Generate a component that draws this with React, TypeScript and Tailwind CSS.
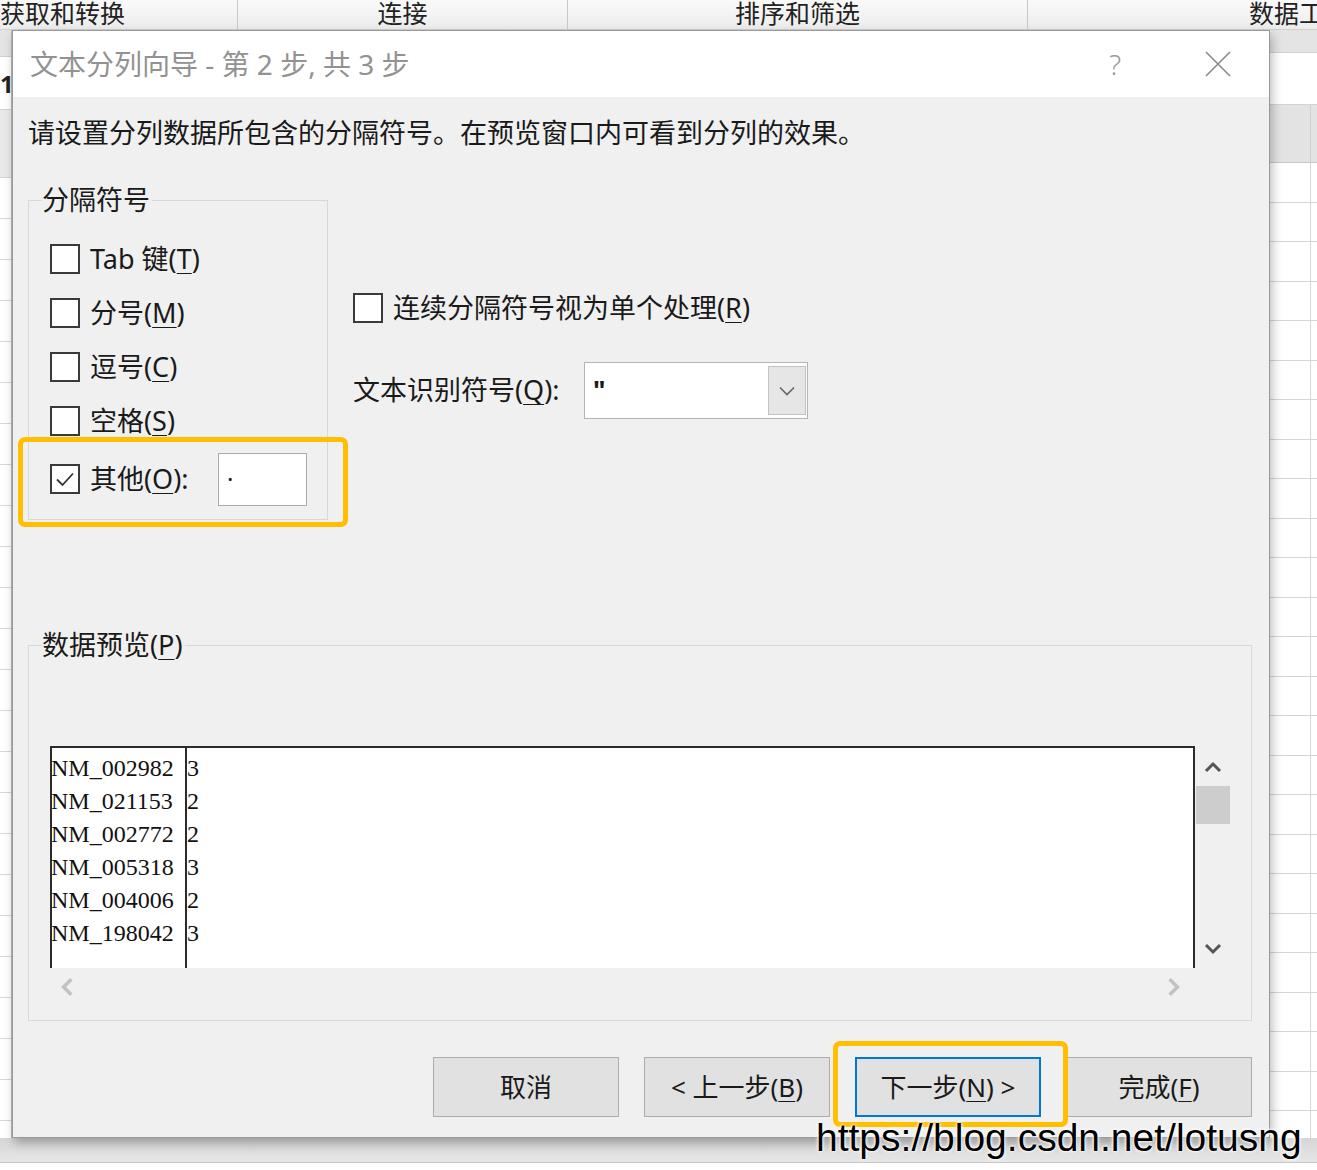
import React from 'react';

const ui = "font-['Noto_Sans','Noto_Sans_CJK_SC',sans-serif]";

// mnemonic letter, underlined like a Windows access key
const Key = ({ k }: { k: string }) => (
  <span className="underline decoration-1 underline-offset-[4px]">{k}</span>
);

const CheckBox = ({ checked = false }: { checked?: boolean }) => (
  <span className="flex h-[30px] w-[30px] shrink-0 items-center justify-center border-2 border-[#3a3a3a] bg-white">
    {checked && (
      <svg width="22" height="22" viewBox="0 0 22 22">
        <path d="M3 11.5 L8.5 17 L19 5.5" fill="none" stroke="#333" strokeWidth="1.8" />
      </svg>
    )}
  </span>
);

const rows: [string, string][] = [
  ['NM_002982', '3'],
  ['NM_021153', '2'],
  ['NM_002772', '2'],
  ['NM_005318', '3'],
  ['NM_004006', '2'],
  ['NM_198042', '3'],
];

const Chevron = ({ dir, color, w = 18, sw = 3 }: { dir: 'up' | 'down' | 'left' | 'right'; color: string; w?: number; sw?: number }) => {
  const d = {
    up: 'M2 12 L9 5 L16 12',
    down: 'M2 6 L9 13 L16 6',
    left: 'M12 2 L5 9 L12 16',
    right: 'M6 2 L13 9 L6 16',
  }[dir];
  return (
    <svg width={w} height={w} viewBox="0 0 18 18">
      <path d={d} fill="none" stroke={color} strokeWidth={sw} />
    </svg>
  );
};

function Ribbon() {
  return (
    <div className="flex h-[30px] border-b border-[#d0d0d0] bg-gradient-to-b from-[#fafafa] to-[#ececec] font-['Liberation_Sans','Noto_Sans_CJK_SC',sans-serif] text-[25px] leading-[29px] text-[#222]">
      <div className="w-[238px] shrink-0 border-r border-[#c8c8c8] whitespace-nowrap">
        <span className="inline-block">获取和转换</span>
      </div>
      <div className="w-[330px] shrink-0 border-r border-[#c8c8c8] text-center">连接</div>
      <div className="w-[460px] shrink-0 border-r border-[#c8c8c8] text-center">排序和筛选</div>
      <div className="pl-[221px] whitespace-nowrap">数据工具</div>
    </div>
  );
}

function LeftStrip() {
  return (
    <div className="flex w-[12px] shrink-0 flex-col border-r border-[#b8b8b8] bg-white">
      <div className="h-[27px] border-b border-[#cfcfcf] bg-[#e4e4e4]" />
      <div className="h-[53px] overflow-hidden border-b border-[#d4d4d4] text-[24px] font-bold leading-[53px] text-[#222]">1</div>
      <div className="h-[68px] border-b border-[#d4d4d4] bg-[#e9e9e9]" />
      {Array.from({ length: 23 }).map((_, i) => (
        <div key={i} className="h-[41px] shrink-0 border-b border-[#d8d8d8]" />
      ))}
    </div>
  );
}

function RightStrip() {
  return (
    <div className="flex flex-1 flex-col overflow-hidden bg-white">
      <div className="h-[23px] shrink-0 border-b border-[#d0d0d0] bg-[#e4e4e4]" />
      <div className="h-[52px] shrink-0 border-b border-[#d4d4d4]" />
      <div className="flex h-[58px] shrink-0 border-b border-[#c8c8c8] bg-[#e3e3e3]">
        <div className="w-[41px] border-r border-[#cfcfcf]" />
      </div>
      {Array.from({ length: 25 }).map((_, i) => (
        <div key={i} className="flex h-[39.5px] shrink-0 border-b border-[#d6d6d6]">
          <div className="w-[41px] border-r border-[#d6d6d6]" />
        </div>
      ))}
    </div>
  );
}

function Dialog() {
  return (
    <div className="relative z-10 flex h-[1108px] w-[1258px] shrink-0 flex-col border border-[#9a9a9a] bg-[#f0f0f0] shadow-[2px_5px_10px_rgba(0,0,0,0.28)]">
      {/* title bar */}
      <div className="flex h-[66px] shrink-0 items-center bg-white pl-[17px] pr-[38px]">
        <span className="text-[28px] text-[#929292]">文本分列向导 - 第 2 步, 共 3 步</span>
        <span className="ml-auto text-[28px] font-light text-[#9a9a9a]">?</span>
        <svg className="ml-[84px]" width="26" height="26" viewBox="0 0 26 26">
          <path d="M1 1 L25 25 M25 1 L1 25" stroke="#8a8a8a" strokeWidth="1.6" />
        </svg>
      </div>

      <div className="flex flex-1 flex-col pl-[15px] pr-[17px] text-[#1a1a1a]">
        <p className="mt-[18px] text-[27px] leading-[36px]">请设置分列数据所包含的分隔符号。在预览窗口内可看到分列的效果。</p>

        <div className="mt-[31px] flex items-start gap-[25px]">
          <fieldset className="w-[300px] border border-[#d8d8d8] pb-[9px] pt-[14px] pl-[21px]">
            <legend className="-ml-[8px] pr-[2px] text-[27px] leading-[36px]">分隔符号</legend>
            <div className="flex h-[54px] items-center gap-[10px] text-[27px]">
              <CheckBox />
              <span>Tab 键(<Key k="T" />)</span>
            </div>
            <div className="flex h-[54px] items-center gap-[10px] text-[27px]">
              <CheckBox />
              <span>分号(<Key k="M" />)</span>
            </div>
            <div className="flex h-[54px] items-center gap-[10px] text-[27px]">
              <CheckBox />
              <span>逗号(<Key k="C" />)</span>
            </div>
            <div className="flex h-[54px] items-center gap-[10px] text-[27px]">
              <CheckBox />
              <span>空格(<Key k="S" />)</span>
            </div>
            <div className="flex h-[62px] items-center gap-[10px] text-[27px]">
              <CheckBox checked />
              <span className="w-[118px]">其他(<Key k="O" />):</span>
              <div className="flex h-[53px] w-[89px] items-center border border-[#ababab] bg-white pl-[8px] text-[24px]">·</div>
            </div>
          </fieldset>

          <div className="flex flex-col">
            <div className="mt-[111px] flex h-[30px] items-center gap-[10px] text-[27px]">
              <CheckBox />
              <span>连续分隔符号视为单个处理(<Key k="R" />)</span>
            </div>
            <div className="mt-[39px] flex items-center text-[27px]">
              <span className="w-[231px]">文本识别符号(<Key k="Q" />):</span>
              <div className="flex h-[57px] w-[224px] items-center border border-[#b4b4b4] bg-white">
                <span className="pl-[8px] text-[26px] font-bold">"</span>
                <div className="ml-auto mr-[1px] flex h-[49px] w-[38px] items-center justify-center border border-[#c2c2c2] bg-[#e6e6e6]">
                  <svg width="16" height="10" viewBox="0 0 16 10">
                    <path d="M1 1.5 L8 8.5 L15 1.5" fill="none" stroke="#666" strokeWidth="1.6" />
                  </svg>
                </div>
              </div>
            </div>
          </div>
        </div>

        <fieldset className="mt-[107px] border border-[#d8d8d8] pb-[14px] pl-[21px] pr-[20px] pt-[83px]">
          <legend className="-ml-[8px] pr-[2px] text-[27px] leading-[36px]">数据预览(<Key k="P" />)</legend>
          <div className="flex">
            <div className="h-[222px] w-[1145px] overflow-hidden border-x-2 border-t-2 border-[#2b2b2b] bg-white font-['Liberation_Serif',serif] text-[24px] text-[#111]">
              <div className="flex h-full">
                <div className="w-[135px] border-r-2 border-[#2b2b2b] pt-[4px]">
                  {rows.map(([id]) => (
                    <div key={id} className="-ml-[1px] h-[33px] leading-[33px]">{id}</div>
                  ))}
                </div>
                <div className="pt-[4px]">
                  {rows.map(([id, n]) => (
                    <div key={id} className="h-[33px] leading-[33px]">{n}</div>
                  ))}
                </div>
              </div>
            </div>
            <div className="relative h-[222px] w-[36px]">
              <div className="absolute left-[9px] top-[13px]">
                <Chevron dir="up" color="#555" />
              </div>
              <div className="absolute left-[1px] top-[40px] h-[38px] w-[34px] bg-[#cdcdcd]" />
              <div className="absolute left-[9px] top-[193px]">
                <Chevron dir="down" color="#555" />
              </div>
            </div>
          </div>
          <div className="flex h-[38px] w-[1145px] items-center justify-between pl-[8px] pr-[12px]">
            <Chevron dir="left" color="#c2c2c2" w={20} sw={3.2} />
            <Chevron dir="right" color="#c2c2c2" w={20} sw={3.2} />
          </div>
        </fieldset>

        <div className="mt-[36px] flex justify-end gap-[25px] text-[26px]">
          <button className="h-[60px] w-[186px] border border-[#adadad] bg-[#e1e1e1]">取消</button>
          <button className="h-[60px] w-[186px] border border-[#adadad] bg-[#e1e1e1]">&lt; 上一步(<Key k="B" />)</button>
          <button className="h-[60px] w-[186px] border-2 border-[#0078d7] bg-[#e1e1e1]">下一步(<Key k="N" />) &gt;</button>
          <button className="h-[60px] w-[186px] border border-[#adadad] bg-[#e1e1e1]">完成(<Key k="F" />)</button>
        </div>
      </div>
    </div>
  );
}

export default function App() {
  return (
    <div className={`relative h-[1170px] w-[1317px] overflow-hidden bg-white ${ui}`}>
      <Ribbon />
      <div className="flex h-[1108px]">
        <LeftStrip />
        <Dialog />
        <RightStrip />
      </div>
      <div className="h-[25px] border-b border-[#c6c6c6] bg-gradient-to-b from-[#d6d6d6] to-[#e6e6e6]" />

      {/* highlight frames */}
      <div className="absolute left-[18px] top-[437px] z-20 h-[90px] w-[330px] rounded-[7px] border-[5px] border-[#ffbf00]" />
      <div className="absolute left-[833px] top-[1041px] z-20 h-[86px] w-[235px] rounded-[7px] border-[5px] border-[#ffbf00]" />

      <div className="absolute left-[816px] top-[1115px] z-30 font-['Liberation_Sans',Arial,sans-serif] text-[39px] leading-[46px] text-black [text-shadow:0_0_2px_#fff,0_0_3px_#fff,0_0_4px_#fff]">
        https://blog.csdn.net/lotusng
      </div>
    </div>
  );
}
